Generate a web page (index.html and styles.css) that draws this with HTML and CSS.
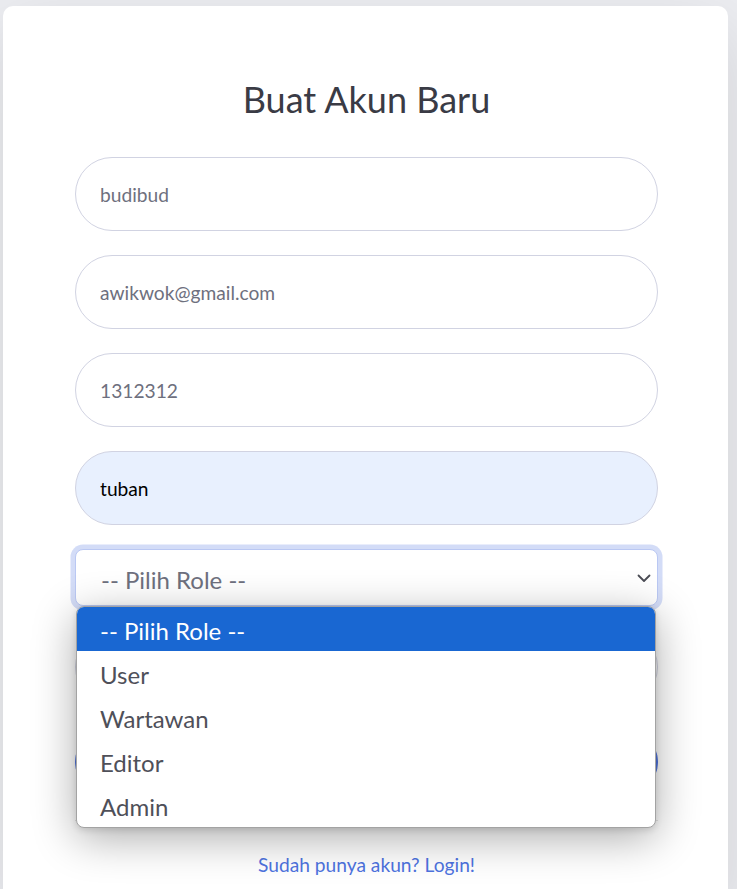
FILE: index.html
```html
<!DOCTYPE html>
<html lang="id">
<head>
<meta charset="utf-8">
<title>Buat Akun Baru</title>
<link rel="stylesheet" href="styles.css">
</head>
<body>
<div class="card">
  <h1 class="title">Buat Akun Baru</h1>
  <form class="form">
    <input class="field" type="text" value="budibud">
    <input class="field" type="email" value="awikwok@gmail.com">
    <input class="field" type="text" value="1312312">
    <input class="field field-autofill" type="text" value="tuban">
    <div class="select-wrap">
      <div class="select">
        <span class="select-text">-- Pilih Role --</span>
        <svg class="chevron" width="14" height="9" viewBox="0 0 14 9"><path d="M1.5 1.5 L7 7 L12.5 1.5" fill="none" stroke="#4b4c55" stroke-width="1.8" stroke-linecap="round" stroke-linejoin="round"/></svg>
      </div>
      <ul class="popup">
        <li class="option option-active">-- Pilih Role --</li>
        <li class="option">User</li>
        <li class="option">Wartawan</li>
        <li class="option">Editor</li>
        <li class="option">Admin</li>
      </ul>
    </div>
    <input class="field" type="password" placeholder="Password">
    <button class="btn" type="button">Daftar</button>
  </form>
  <hr class="divider">
  <div class="foot"><a class="link" href="#">Sudah punya akun? Login!</a></div>
</div>
</body>
</html>
```
FILE: styles.css
```css
html, body {
  margin: 0;
  padding: 0;
}
body {
  background: #ecedf1;
  font-family: Lato, "Liberation Sans", sans-serif;
  overflow: hidden;
  height: 889px;
}
.card {
  margin: 6px 9px 0 3px;
  background: #fff;
  border-radius: 10px 10px 0 0;
  padding: 72px 70px 8px 72px;
  box-shadow: 0 24px 72px rgba(0, 0, 0, 0.12);
}
.title {
  margin: 0 0 36px;
  font-size: 36px;
  line-height: 1.2;
  font-weight: 400;
  color: #3a3b45;
  text-align: center;
}
.form {
  display: flex;
  flex-direction: column;
  gap: 24px;
}
.field {
  box-sizing: border-box;
  width: 100%;
  height: 74px;
  margin: 0;
  padding: 0 24px;
  border: 1px solid #d1d3e2;
  border-radius: 999px;
  background: #fff;
  font-family: Lato, "Liberation Sans", sans-serif;
  font-size: 19.2px;
  color: #6e707e;
  outline: none;
}
.field::placeholder {
  color: #858796;
}
.field-autofill {
  background: #e8f0fe;
  color: #000;
}
.select-wrap {
  position: relative;
}
.select {
  box-sizing: border-box;
  height: 57px;
  display: flex;
  align-items: center;
  justify-content: space-between;
  padding: 0 6px 0 25px;
  border: 1px solid #bac8f3;
  border-radius: 8px;
  background: #fff;
  box-shadow: 0 0 0 4.5px rgba(78, 115, 223, 0.25);
}
.select-text {
  padding-top: 4px;
  font-size: 24px;
  color: #6e707e;
}
.chevron {
  display: block;
  margin-top: 2px;
}
.popup {
  position: absolute;
  top: 100%;
  left: 1px;
  right: 2px;
  z-index: 5;
  margin: 0;
  padding: 0;
  list-style: none;
  background: #fff;
  border: 1px solid #a3a3a3;
  border-radius: 8px;
  overflow: hidden;
  box-shadow: 0 10px 44px rgba(0, 0, 0, 0.33), 0 2px 6px rgba(0, 0, 0, 0.12);
}
.option {
  box-sizing: border-box;
  height: 44px;
  line-height: 40px;
  padding: 4px 0 0 23px;
  font-size: 24px;
  color: #4f5059;
}
.option-active {
  background: #1967d2;
  color: #fff;
}
.btn {
  box-sizing: border-box;
  height: 68px;
  width: 100%;
  border: 1px solid #4e73df;
  border-radius: 999px;
  background: #4e73df;
  color: #fff;
  font-family: Lato, "Liberation Sans", sans-serif;
  font-size: 19.2px;
}
.divider {
  margin: 24px 0;
  border: 0;
  border-top: 1px solid rgba(0, 0, 0, 0.1);
}
.foot {
  padding-top: 2px;
  text-align: center;
  line-height: 36px;
}
.link {
  font-size: 19.2px;
  color: #4e73df;
  text-decoration: none;
}
```
